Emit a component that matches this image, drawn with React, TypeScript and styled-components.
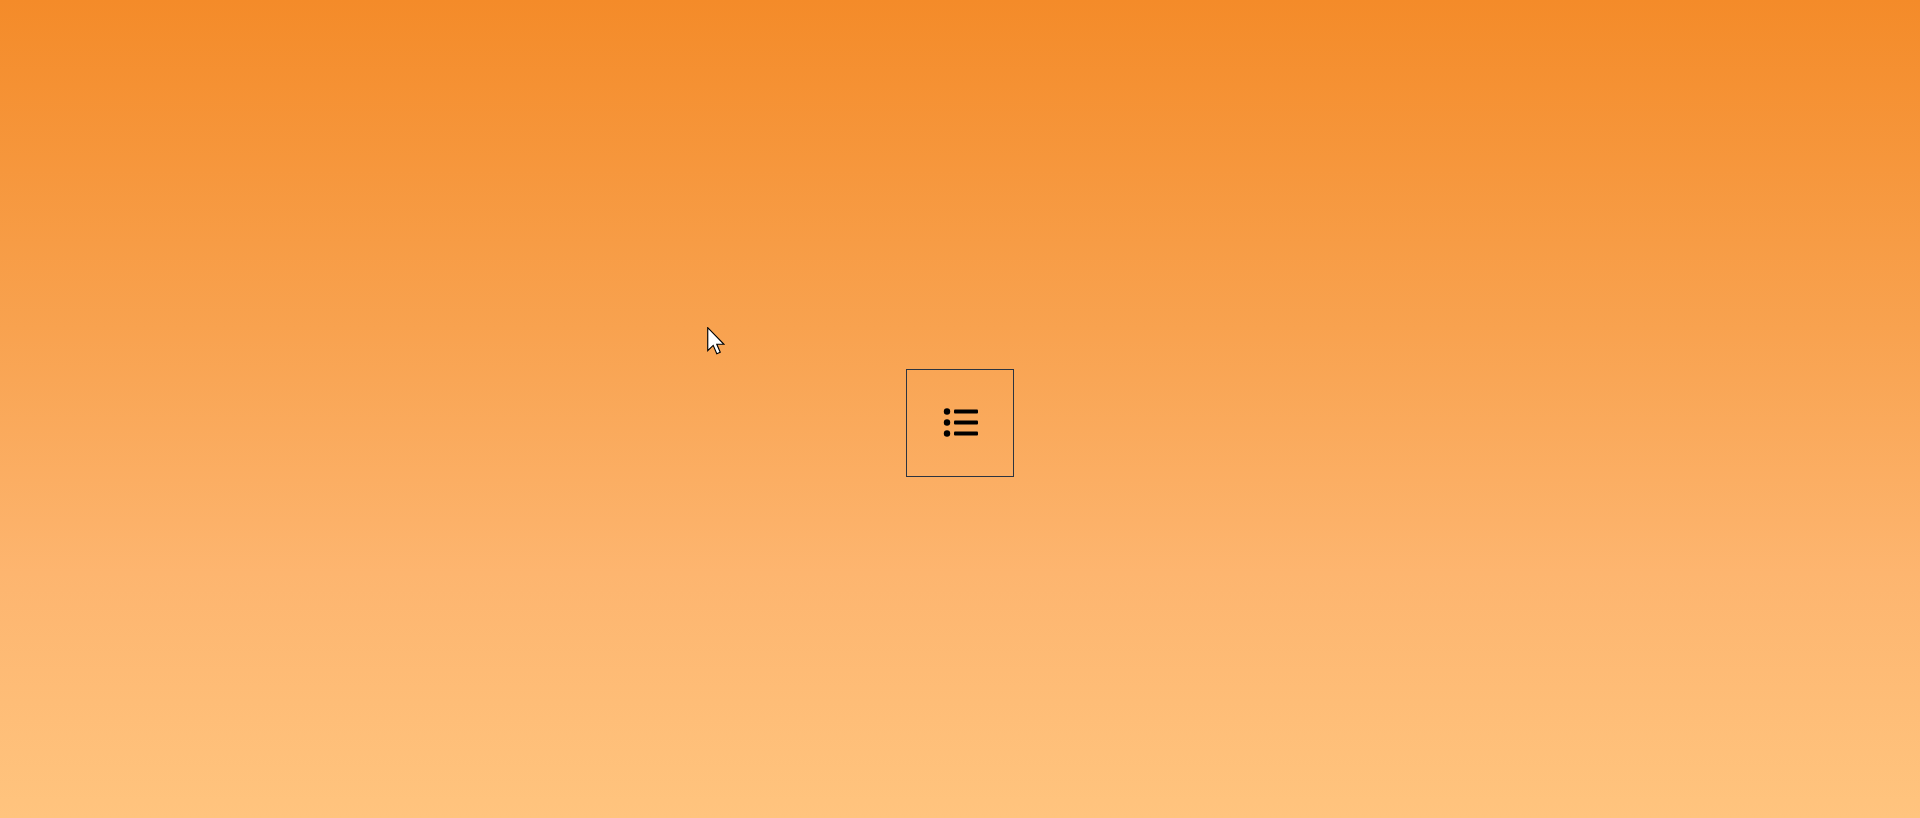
import React from "react";
import styled, { createGlobalStyle } from "styled-components";

const Global = createGlobalStyle`
  html, body { margin: 0; padding: 0; }
  body { font-family: "Liberation Sans", Arial, sans-serif; }
`;

const Page = styled.div`
  position: relative;
  width: 100%;
  height: 818px;
  box-sizing: border-box;
  padding-top: 28px;
  display: flex;
  align-items: center;
  justify-content: center;
  background: linear-gradient(to bottom, #f48b29 0%, #f8a24f 40%, #fdb56f 70%, #ffc47e 100%);
  overflow: hidden;
`;

const IconButton = styled.button`
  width: 108px;
  height: 108px;
  box-sizing: border-box;
  border: 1px solid #2c3440;
  background: transparent;
  padding: 0 0 2px 2px;
  display: flex;
  align-items: center;
  justify-content: center;
  cursor: pointer;
`;

const Cursor = styled.svg`
  position: absolute;
  left: 707px;
  top: 327px;
  pointer-events: none;
`;

export default function App() {
  return (
    <>
      <Global />
      <Page>
        <IconButton aria-label="List">
          <svg width="36" height="30" viewBox="0 0 36 30">
            <circle cx="4" cy="4.5" r="3.2" fill="#000" />
            <circle cx="4" cy="15.5" r="3.2" fill="#000" />
            <circle cx="4" cy="26.5" r="3.2" fill="#000" />
            <rect x="11" y="2.5" width="24" height="4" rx="1" fill="#000" />
            <rect x="11" y="13.5" width="24" height="4" rx="1" fill="#000" />
            <rect x="11" y="24.5" width="24" height="4" rx="1" fill="#000" />
          </svg>
        </IconButton>
        <Cursor width="18" height="28" viewBox="0 0 12.5 19.5">
          <path
            d="M0.5 0.5 L0.5 16.5 L4.3 12.8 L6.8 18.6 L9.2 17.6 L6.8 12 L11.8 12 Z"
            fill="#fff"
            stroke="#000"
            strokeWidth="0.8"
            strokeLinejoin="miter"
          />
        </Cursor>
      </Page>
    </>
  );
}
